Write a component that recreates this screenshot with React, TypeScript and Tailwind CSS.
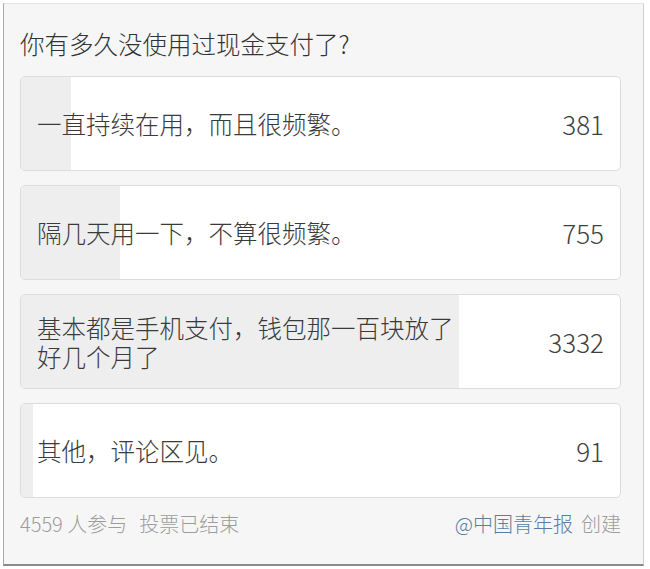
const options = [
  { label: "一直持续在用，而且很频繁。", votes: 381 },
  { label: "隔几天用一下，不算很频繁。", votes: 755 },
  { label: "基本都是手机支付，钱包那一百块放了好几个月了", votes: 3332 },
  { label: "其他，评论区见。", votes: 91 },
];

const total = 4559;

const PollOption = ({ label, votes }: { label: string; votes: number }) => {
  const pct = (votes / total) * 100;
  return (
    <div className="relative h-[95px] overflow-hidden rounded-[5px] border border-[#dcdcdc] bg-white">
      {/* result bar */}
      <div className="absolute inset-y-0 left-0 bg-[#eeeeee]" style={{ width: `${pct}%` }} />
      <div className="relative flex h-full items-center justify-between pl-4 pr-4">
        <span className="max-w-[430px] text-[24.5px] font-light leading-[29px] text-[#3a3a3a]">{label}</span>
        <span className="text-[26px] font-light text-[#3f3f3f]">{votes}</span>
      </div>
    </div>
  );
};

export default function App() {
  return (
    <div
      className="h-[569px] w-[650px] bg-white pl-[3px] pt-[3px]"
      style={{ fontFamily: '"Noto Sans CJK SC", "Noto Sans", sans-serif' }}
    >
      <div className="flex h-[563px] w-[641px] flex-col border-b-2 border-l border-r border-t border-b-[#8a8a8a] border-l-[#a8a8a8] border-r-[#cfcfcf] border-t-[#e4e4e4] bg-[#f6f6f6] pl-4 pr-[22px] pt-6">
        <h1 className="text-[24.5px] font-light leading-8 text-[#333]">你有多久没使用过现金支付了?</h1>

        <div className="mt-4 flex flex-col gap-[14px]">
          {options.map((o) => (
            <PollOption key={o.label} label={o.label} votes={o.votes} />
          ))}
        </div>

        <div className="mt-[14px] flex items-center justify-between text-[20px] font-light leading-6">
          <div className="text-[#9c9c9c]">
            <span>4559 人参与</span>
            <span className="ml-3">投票已结束</span>
          </div>
          <div>
            <span className="text-[#5b7ca4]">@中国青年报</span>
            <span className="ml-2 text-[#9c9c9c]">创建</span>
          </div>
        </div>
      </div>
    </div>
  );
}
